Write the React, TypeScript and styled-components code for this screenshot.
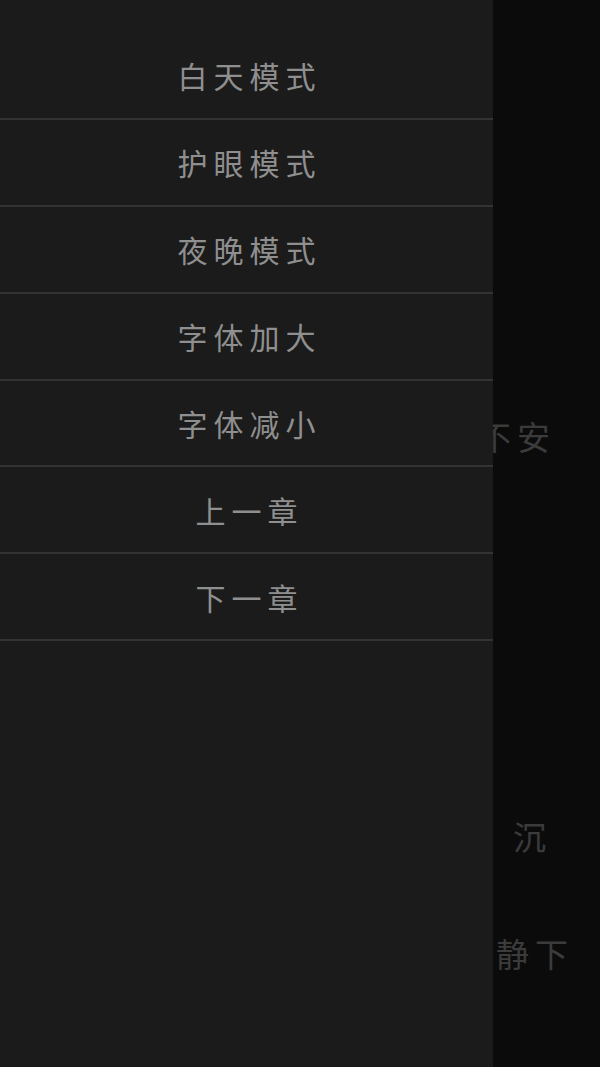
import React from "react";
import styled, { createGlobalStyle } from "styled-components";

const GlobalStyle = createGlobalStyle`
  html, body {
    margin: 0;
    padding: 0;
    background: #0b0b0b;
  }
  #root {
    height: 1067px;
  }
`;

const Page = styled.div`
  position: relative;
  width: 600px;
  height: 1067px;
  overflow: hidden;
  background: #0b0b0b;
  font-family: "Noto Sans CJK SC", "Noto Sans", sans-serif;
`;

// 阅读区（被抽屉遮住大部分）
const Reader = styled.div`
  display: flex;
  flex-direction: column;
  padding-top: 413px;
`;

const Line = styled.p<{ $top: number; $right: number }>`
  margin: ${(p) => p.$top}px 0 0 0;
  padding-right: ${(p) => p.$right}px;
  text-align: right;
  font-size: 33px;
  line-height: 46px;
  letter-spacing: 6px;
  color: #3b3b3b;
  white-space: nowrap;
`;

const Drawer = styled.nav`
  position: absolute;
  top: 0;
  left: 0;
  bottom: 0;
  width: 493px;
  background: #1b1b1b;
  padding-top: 33px;
  box-sizing: border-box;
  display: flex;
  flex-direction: column;
`;

const MenuItem = styled.div`
  height: 86.9px;
  flex-shrink: 0;
  box-sizing: border-box;
  border-bottom: 2px solid #333333;
  display: flex;
  align-items: center;
  justify-content: center;
  font-size: 30px;
  letter-spacing: 6px;
  padding-left: 6px;
  color: #8f8f8f;
  cursor: pointer;
`;

const items = ["白天模式", "护眼模式", "夜晚模式", "字体加大", "字体减小", "上一章", "下一章"];

const App: React.FC = () => {
  return (
    <Page>
      <GlobalStyle />
      <Reader>
        <Line $top={0} $right={44}>不安</Line>
        <Line $top={354} $right={48}>沉</Line>
        <Line $top={71} $right={26}>静下</Line>
      </Reader>
      <Drawer>
        {items.map((item) => (
          <MenuItem key={item}>{item}</MenuItem>
        ))}
      </Drawer>
    </Page>
  );
};

export default App;
